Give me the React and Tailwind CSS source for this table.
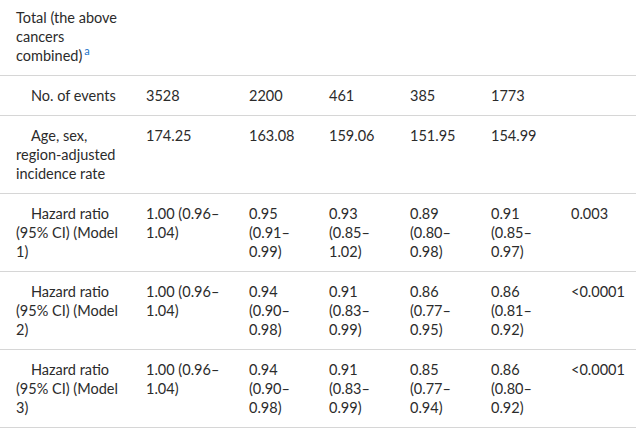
const rows = [
  {
    label: ["No. of events"],
    cells: [["3528"], ["2200"], ["461"], ["385"], ["1773"], []],
  },
  {
    label: ["Age, sex,", "region-adjusted", "incidence rate"],
    cells: [["174.25"], ["163.08"], ["159.06"], ["151.95"], ["154.99"], []],
  },
  {
    label: ["Hazard ratio", "(95% CI) (Model", "1)"],
    cells: [
      ["1.00 (0.96–", "1.04)"],
      ["0.95", "(0.91–", "0.99)"],
      ["0.93", "(0.85–", "1.02)"],
      ["0.89", "(0.80–", "0.98)"],
      ["0.91", "(0.85–", "0.97)"],
      ["0.003"],
    ],
  },
  {
    label: ["Hazard ratio", "(95% CI) (Model", "2)"],
    cells: [
      ["1.00 (0.96–", "1.04)"],
      ["0.94", "(0.90–", "0.98)"],
      ["0.91", "(0.83–", "0.99)"],
      ["0.86", "(0.77–", "0.95)"],
      ["0.86", "(0.81–", "0.92)"],
      ["<0.0001"],
    ],
  },
  {
    label: ["Hazard ratio", "(95% CI) (Model", "3)"],
    cells: [
      ["1.00 (0.96–", "1.04)"],
      ["0.94", "(0.90–", "0.98)"],
      ["0.91", "(0.83–", "0.99)"],
      ["0.85", "(0.77–", "0.94)"],
      ["0.86", "(0.80–", "0.92)"],
      ["<0.0001"],
    ],
  },
];

const Lines = ({ lines, indent }) =>
  lines.map((l, i) => (
    <div key={i} className={`whitespace-nowrap ${indent && i === 0 ? "pl-[15px]" : ""}`}>
      {l}
    </div>
  ));

export default function App() {
  return (
    <div
      className="w-[636px] h-[429px] overflow-hidden bg-white text-[#2b2b2b] text-[14.5px] leading-[19px]"
      style={{ fontFamily: "Lato, 'Noto Sans', sans-serif" }}
    >
      <table className="w-full table-fixed border-collapse text-left -mt-[2px]">
        <colgroup>
          <col className="w-[130px]" />
          <col className="w-[103px]" />
          <col className="w-[80px]" />
          <col className="w-[81px]" />
          <col className="w-[81px]" />
          <col className="w-[80px]" />
          <col className="w-[81px]" />
        </colgroup>
        <tbody>
          <tr className="border-b border-[#d6d6d6]">
            <td className="px-4 py-[10px] align-top">
              <div className="whitespace-nowrap">Total (the above</div>
              <div className="whitespace-nowrap">cancers</div>
              <div className="whitespace-nowrap">
                combined)
                <span className="inline-block align-top text-[11px] leading-none text-[#1a73c8] ml-[2px] relative -top-[1px]">
                  a
                </span>
              </div>
            </td>
            <td colSpan={6}></td>
          </tr>
          {rows.map((r, i) => (
            <tr key={i} className="border-b border-[#d6d6d6]">
              <td className="px-4 py-[10px] align-top">
                <Lines lines={r.label} indent />
              </td>
              {r.cells.map((c, j) => (
                <td key={j} className="px-4 py-[10px] align-top">
                  <Lines lines={c} />
                </td>
              ))}
            </tr>
          ))}
        </tbody>
      </table>
    </div>
  );
}
